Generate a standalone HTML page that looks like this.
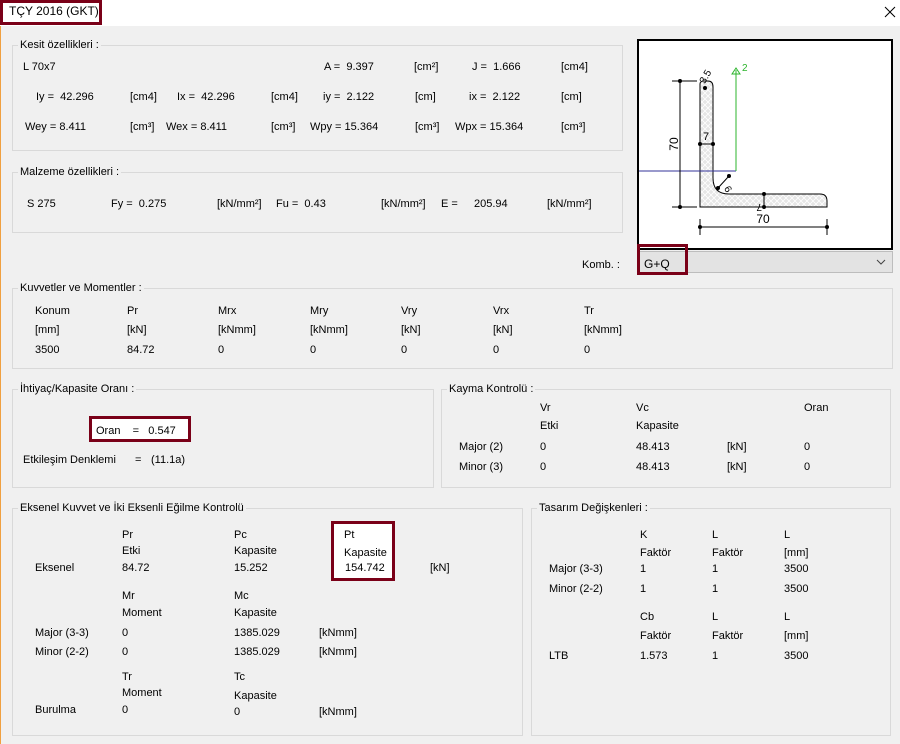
<!DOCTYPE html>
<html><head><meta charset="utf-8"><style>
*{margin:0;padding:0;box-sizing:border-box}
body{width:900px;height:744px;background:#f0f0f0;position:relative;overflow:hidden;font-family:"Liberation Sans",sans-serif;font-size:11px;color:#000}
.t{position:absolute;white-space:pre;line-height:14px}
.g{position:absolute;border:1px solid #d9d9d9}
.gt{position:absolute;background:#f0f0f0;padding:0 2px;line-height:14px;white-space:pre}
.r{position:absolute;border:3px solid #7a0018;background:#fff}
</style></head><body>
<div style="position:absolute;left:0;top:0;width:900px;height:26px;background:#fff"></div>
<div style="position:absolute;left:0;top:26px;width:1px;height:718px;background:#f0a040"></div>
<div class="r" style="left:0;top:0;width:102px;height:25px"></div>
<div class="t" style="left:9px;top:4px;font-size:12px">TÇY 2016 (GKT)</div>
<svg style="position:absolute;left:884px;top:6px" width="12" height="12"><path d="M1 1L11 11M11 1L1 11" stroke="#000" stroke-width="1"/></svg>

<div class="g" style="left:12px;top:45px;width:611px;height:106px"></div>
<div class="gt" style="left:18px;top:38px">Kesit özellikleri :</div>
<div class="g" style="left:12px;top:172px;width:611px;height:61px"></div>
<div class="gt" style="left:18px;top:165px">Malzeme özellikleri :</div>
<div class="g" style="left:12px;top:288px;width:881px;height:81px"></div>
<div class="gt" style="left:18px;top:281px">Kuvvetler ve Momentler :</div>
<div class="g" style="left:12px;top:389px;width:422px;height:99px"></div>
<div class="gt" style="left:18px;top:382px">İhtiyaç/Kapasite Oranı :</div>
<div class="g" style="left:441px;top:389px;width:450px;height:99px"></div>
<div class="gt" style="left:447px;top:382px">Kayma Kontrolü :</div>
<div class="g" style="left:12px;top:508px;width:511px;height:228px"></div>
<div class="gt" style="left:18px;top:501px">Eksenel Kuvvet ve İki Eksenli Eğilme Kontrolü</div>
<div class="g" style="left:531px;top:508px;width:360px;height:228px"></div>
<div class="gt" style="left:537px;top:501px">Tasarım Değişkenleri :</div>

<div class="t" style="left:23px;top:60px">L 70x7</div>
<div class="t" style="left:324px;top:60px">A =  9.397</div><div class="t" style="left:414px;top:60px">[cm²]</div>
<div class="t" style="left:472px;top:60px">J =  1.666</div><div class="t" style="left:561px;top:60px">[cm4]</div>
<div class="t" style="left:36px;top:90px">Iy =  42.296</div><div class="t" style="left:130px;top:90px">[cm4]</div>
<div class="t" style="left:177px;top:90px">Ix =  42.296</div><div class="t" style="left:271px;top:90px">[cm4]</div>
<div class="t" style="left:323px;top:90px">iy =  2.122</div><div class="t" style="left:415px;top:90px">[cm]</div>
<div class="t" style="left:469px;top:90px">ix =  2.122</div><div class="t" style="left:561px;top:90px">[cm]</div>
<div class="t" style="left:25px;top:120px">Wey = 8.411</div><div class="t" style="left:130px;top:120px">[cm³]</div>
<div class="t" style="left:166px;top:120px">Wex = 8.411</div><div class="t" style="left:271px;top:120px">[cm³]</div>
<div class="t" style="left:310px;top:120px">Wpy = 15.364</div><div class="t" style="left:415px;top:120px">[cm³]</div>
<div class="t" style="left:455px;top:120px">Wpx = 15.364</div><div class="t" style="left:561px;top:120px">[cm³]</div>

<div class="t" style="left:27px;top:197px">S 275</div>
<div class="t" style="left:111px;top:197px">Fy =  0.275</div><div class="t" style="left:217px;top:197px">[kN/mm²]</div>
<div class="t" style="left:276px;top:197px">Fu =  0.43</div><div class="t" style="left:381px;top:197px">[kN/mm²]</div>
<div class="t" style="left:441px;top:197px">E =</div><div class="t" style="left:474px;top:197px">205.94</div><div class="t" style="left:547px;top:197px">[kN/mm²]</div>

<div style="position:absolute;left:637px;top:39px;width:256px;height:211px;border:2px solid #000;background:#fff"></div>
<svg style="position:absolute;left:0;top:0" width="900" height="744">
<defs><pattern id="h" width="6" height="6" patternUnits="userSpaceOnUse"><rect width="6" height="6" fill="#e6e6e6"/><path d="M0 0L6 6M6 0L0 6" stroke="#fff" stroke-width="0.8"/></pattern></defs>
<path d="M700 207V84Q700 81 704 81H708Q713 81 713 87V178Q713 194 729 194H820Q827 194 827 201V207Z" fill="url(#h)" stroke="#000" stroke-width="1"/>
<line x1="639" y1="171" x2="736" y2="171" stroke="#33339a"/>
<line x1="736" y1="171" x2="736" y2="70" stroke="#2db52d"/>
<path d="M732 74L736 68L740 74Z" fill="none" stroke="#2db52d"/>
<text x="742" y="71" font-size="10" fill="#2db52d" font-family="Liberation Sans">2</text>
<line x1="680" y1="81" x2="680" y2="207" stroke="#000"/>
<line x1="672" y1="81" x2="697" y2="81" stroke="#000"/><line x1="672" y1="207" x2="697" y2="207" stroke="#000"/>
<circle cx="680" cy="81" r="2"/><circle cx="680" cy="207" r="2"/>
<text x="678" y="144" font-size="12" transform="rotate(-90 678 144)" text-anchor="middle" font-family="Liberation Sans">70</text>
<line x1="700" y1="227" x2="827" y2="227" stroke="#000"/>
<line x1="700" y1="219" x2="700" y2="235" stroke="#000"/><line x1="827" y1="219" x2="827" y2="235" stroke="#000"/>
<circle cx="700" cy="227" r="2"/><circle cx="827" cy="227" r="2"/>
<text x="763" y="223" font-size="12" text-anchor="middle" font-family="Liberation Sans">70</text>
<line x1="700" y1="144" x2="713" y2="144" stroke="#000"/><circle cx="700" cy="144" r="2"/><circle cx="713" cy="144" r="2"/>
<text x="703" y="140" font-size="11" font-family="Liberation Sans">7</text>
<line x1="764" y1="194" x2="764" y2="207" stroke="#000"/><circle cx="764" cy="194" r="2"/><circle cx="764" cy="207" r="2"/>
<text x="756" y="198" font-size="10" transform="rotate(180 759 201)" font-family="Liberation Sans">7</text>
<line x1="718" y1="188" x2="729" y2="176" stroke="#000"/><circle cx="718" cy="188" r="2"/><circle cx="729" cy="176" r="2"/>
<text x="724" y="192" font-size="10" transform="rotate(60 727 190)" font-family="Liberation Sans">6</text>
<circle cx="705" cy="88" r="2"/>
<text x="700" y="80" font-size="10" transform="rotate(-60 706 78)" font-family="Liberation Sans">3.5</text>
</svg>

<div class="t" style="left:582px;top:258px">Komb. :</div>
<div style="position:absolute;left:637px;top:251px;width:256px;height:22px;background:#e3e3e3;border:1px solid #bdbdbd"></div>
<svg style="position:absolute;left:876px;top:259px" width="10" height="6"><path d="M1 1L5 5L9 1" fill="none" stroke="#444"/></svg>
<div style="position:absolute;left:637px;top:244px;width:51px;height:31px;border:3px solid #7a0018"></div>
<div class="t" style="left:644px;top:257px;font-size:12px">G+Q</div>

<div class="t" style="left:35px;top:304px">Konum</div><div class="t" style="left:127px;top:304px">Pr</div><div class="t" style="left:218px;top:304px">Mrx</div><div class="t" style="left:310px;top:304px">Mry</div><div class="t" style="left:401px;top:304px">Vry</div><div class="t" style="left:493px;top:304px">Vrx</div><div class="t" style="left:584px;top:304px">Tr</div>
<div class="t" style="left:35px;top:323px">[mm]</div><div class="t" style="left:127px;top:323px">[kN]</div><div class="t" style="left:218px;top:323px">[kNmm]</div><div class="t" style="left:310px;top:323px">[kNmm]</div><div class="t" style="left:401px;top:323px">[kN]</div><div class="t" style="left:493px;top:323px">[kN]</div><div class="t" style="left:584px;top:323px">[kNmm]</div>
<div class="t" style="left:35px;top:343px">3500</div><div class="t" style="left:127px;top:343px">84.72</div><div class="t" style="left:218px;top:343px">0</div><div class="t" style="left:310px;top:343px">0</div><div class="t" style="left:401px;top:343px">0</div><div class="t" style="left:493px;top:343px">0</div><div class="t" style="left:584px;top:343px">0</div>

<div class="r" style="left:89px;top:416px;width:102px;height:26px"></div>
<div class="t" style="left:96px;top:424px">Oran    =   0.547</div>
<div class="t" style="left:23px;top:453px">Etkileşim Denklemi</div><div class="t" style="left:135px;top:453px">=</div><div class="t" style="left:151px;top:453px">(11.1a)</div>

<div class="t" style="left:540px;top:401px">Vr</div><div class="t" style="left:636px;top:401px">Vc</div><div class="t" style="left:804px;top:401px">Oran</div>
<div class="t" style="left:540px;top:419px">Etki</div><div class="t" style="left:636px;top:419px">Kapasite</div>
<div class="t" style="left:459px;top:440px">Major (2)</div><div class="t" style="left:540px;top:440px">0</div><div class="t" style="left:636px;top:440px">48.413</div><div class="t" style="left:727px;top:440px">[kN]</div><div class="t" style="left:804px;top:440px">0</div>
<div class="t" style="left:459px;top:460px">Minor (3)</div><div class="t" style="left:540px;top:460px">0</div><div class="t" style="left:636px;top:460px">48.413</div><div class="t" style="left:727px;top:460px">[kN]</div><div class="t" style="left:804px;top:460px">0</div>

<div class="r" style="left:331px;top:521px;width:64px;height:60px"></div>
<div class="t" style="left:122px;top:528px">Pr</div><div class="t" style="left:234px;top:528px">Pc</div><div class="t" style="left:344px;top:528px">Pt</div>
<div class="t" style="left:122px;top:544px">Etki</div><div class="t" style="left:234px;top:544px">Kapasite</div><div class="t" style="left:344px;top:546px">Kapasite</div>
<div class="t" style="left:35px;top:561px">Eksenel</div><div class="t" style="left:122px;top:561px">84.72</div><div class="t" style="left:234px;top:561px">15.252</div><div class="t" style="left:345px;top:561px">154.742</div><div class="t" style="left:430px;top:561px">[kN]</div>
<div class="t" style="left:122px;top:589px">Mr</div><div class="t" style="left:234px;top:589px">Mc</div>
<div class="t" style="left:122px;top:606px">Moment</div><div class="t" style="left:234px;top:606px">Kapasite</div>
<div class="t" style="left:35px;top:626px">Major (3-3)</div><div class="t" style="left:122px;top:626px">0</div><div class="t" style="left:234px;top:626px">1385.029</div><div class="t" style="left:319px;top:626px">[kNmm]</div>
<div class="t" style="left:35px;top:645px">Minor (2-2)</div><div class="t" style="left:122px;top:645px">0</div><div class="t" style="left:234px;top:645px">1385.029</div><div class="t" style="left:319px;top:645px">[kNmm]</div>
<div class="t" style="left:122px;top:670px">Tr</div><div class="t" style="left:234px;top:670px">Tc</div>
<div class="t" style="left:122px;top:686px">Moment</div><div class="t" style="left:234px;top:689px">Kapasite</div>
<div class="t" style="left:35px;top:703px">Burulma</div><div class="t" style="left:122px;top:703px">0</div><div class="t" style="left:234px;top:705px">0</div><div class="t" style="left:319px;top:705px">[kNmm]</div>

<div class="t" style="left:640px;top:528px">K</div><div class="t" style="left:712px;top:528px">L</div><div class="t" style="left:784px;top:528px">L</div>
<div class="t" style="left:640px;top:546px">Faktör</div><div class="t" style="left:712px;top:546px">Faktör</div><div class="t" style="left:784px;top:546px">[mm]</div>
<div class="t" style="left:549px;top:562px">Major (3-3)</div><div class="t" style="left:640px;top:562px">1</div><div class="t" style="left:712px;top:562px">1</div><div class="t" style="left:784px;top:562px">3500</div>
<div class="t" style="left:549px;top:582px">Minor (2-2)</div><div class="t" style="left:640px;top:582px">1</div><div class="t" style="left:712px;top:582px">1</div><div class="t" style="left:784px;top:582px">3500</div>
<div class="t" style="left:640px;top:610px">Cb</div><div class="t" style="left:712px;top:610px">L</div><div class="t" style="left:784px;top:610px">L</div>
<div class="t" style="left:640px;top:629px">Faktör</div><div class="t" style="left:712px;top:629px">Faktör</div><div class="t" style="left:784px;top:629px">[mm]</div>
<div class="t" style="left:549px;top:649px">LTB</div><div class="t" style="left:640px;top:649px">1.573</div><div class="t" style="left:712px;top:649px">1</div><div class="t" style="left:784px;top:649px">3500</div>
</body></html>
